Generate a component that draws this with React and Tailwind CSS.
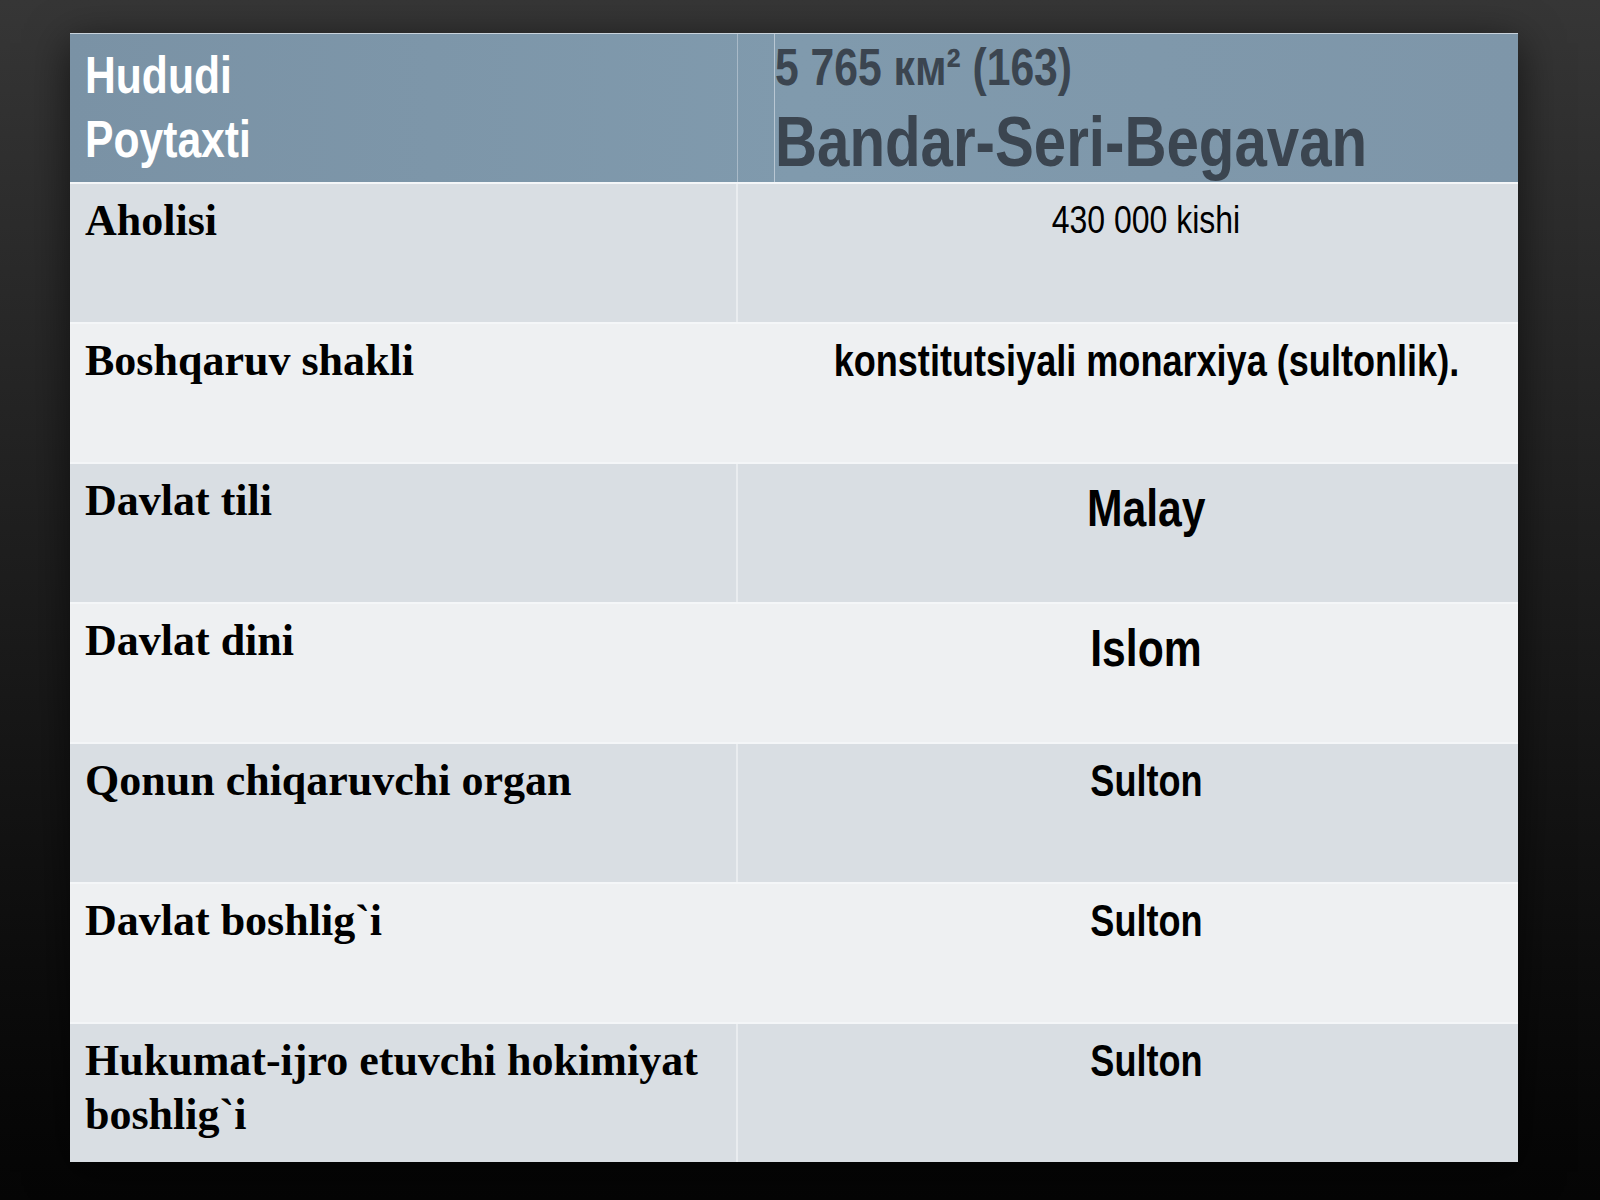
const rows = [
  { label: "Aholisi", value: "430 000 kishi", kind: "plain" },
  { label: "Boshqaruv shakli", value: "konstitutsiyali monarxiya (sultonlik).", kind: "bold" },
  { label: "Davlat tili", value: "Malay", kind: "big" },
  { label: "Davlat dini", value: "Islom", kind: "big" },
  { label: "Qonun chiqaruvchi organ", value: "Sulton", kind: "bold" },
  { label: "Davlat boshlig`i", value: "Sulton", kind: "bold" },
  { label: "Hukumat-ijro etuvchi hokimiyat boshlig`i", value: "Sulton", kind: "bold" },
];

// no narrow face installed, so Liberation Sans is squeezed to Arial Narrow widths
const sans = "font-['Liberation_Sans',Arial,sans-serif]";

function Narrow({ className = "", left = false, children }) {
  return (
    <span
      className={`${sans} inline-block whitespace-nowrap scale-x-[0.82] ${left ? "origin-left" : "origin-center"} ${className}`}
    >
      {children}
    </span>
  );
}

function ValueText({ kind, children }) {
  if (kind === "plain") {
    return <Narrow className="pt-[9px] text-[39px] leading-[54px] text-black">{children}</Narrow>;
  }
  if (kind === "big") {
    return <Narrow className="pt-[14px] text-[52px] font-bold leading-[60px] text-black">{children}</Narrow>;
  }
  return <Narrow className="pt-[10px] text-[44px] font-bold leading-[54px] text-black">{children}</Narrow>;
}

export default function App() {
  return (
    <div className="min-h-[1200px] w-full bg-gradient-to-b from-[#363636] via-[#1c1c1c] to-[#050505] px-[70px] pt-[33px]">
      <div className="w-[1448px] border-t border-[#c9d3dc] shadow-[0_10px_40px_rgba(0,0,0,0.6)]">
        <div className="grid h-[148px] grid-cols-[668px_780px] bg-gradient-to-r from-[#7a92a5] via-[#809aad] to-[#7e96a9]">
          <div className="flex flex-col items-start border-r border-[#a9bac8] pl-[15px] pt-[9px]">
            <Narrow left className="text-[52px] font-bold leading-[64px] text-white">Hududi</Narrow>
            <Narrow left className="text-[52px] font-bold leading-[64px] text-white">Poytaxti</Narrow>
          </div>
          <div className="pl-[36px]">
            <div className="flex h-full flex-col items-start border-l border-[#b9c7d3]">
              <Narrow left className="pt-[6px] text-[52px] font-bold leading-[54px] text-[#3b4550]">
                5 765 км² (163)
              </Narrow>
              <Narrow left className="mt-[8px] text-[71px] font-bold leading-[80px] text-[#3b4550]">
                Bandar-Seri-Begavan
              </Narrow>
            </div>
          </div>
        </div>
        {rows.map((row, i) => (
          <div
            key={row.label}
            className={`grid h-[140px] grid-cols-[668px_780px] border-t-2 border-[#f4f6f8] ${
              i % 2 === 0 ? "bg-[#d9dee3]" : "bg-[#eef0f2]"
            }`}
          >
            <div className={`pl-[15px] pr-[10px] pt-[10px] ${i % 2 === 0 ? "border-r-2 border-[#e9ecef]" : ""}`}>
              <p className="font-['Liberation_Serif',serif] text-[44px] font-bold leading-[54px] text-black">
                {row.label}
              </p>
            </div>
            <div className="flex items-start justify-center pl-[52px] pr-[16px]">
              <ValueText kind={row.kind}>{row.value}</ValueText>
            </div>
          </div>
        ))}
      </div>
    </div>
  );
}
